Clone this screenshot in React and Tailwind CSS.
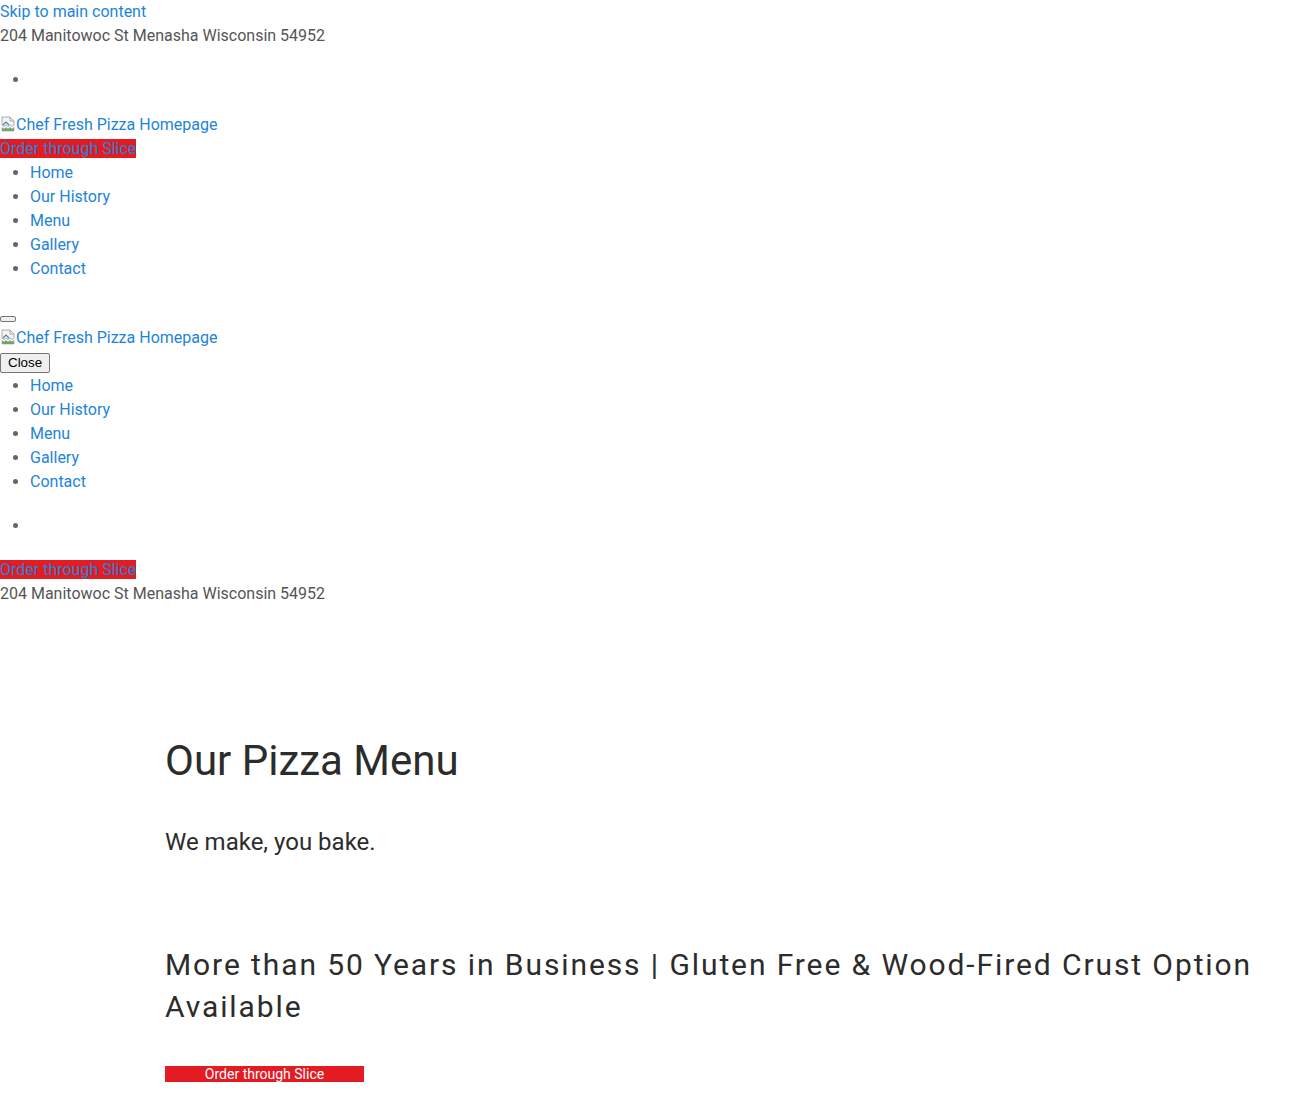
import React from "react";

const BrokenImg = () => (
  <svg width="16" height="16" viewBox="0 0 16 16" className="inline-block align-[-2px]">
    <path d="M2 1h8l4 4v4l-2 1.5-2-1.5-2 1.5-2-1.5-2 1.5-2-1.5z" fill="#f4f4f4" stroke="#9a9a9a" strokeWidth="0.8" />
    <path d="M10 1v4h4" fill="none" stroke="#9a9a9a" strokeWidth="0.8" />
    <path d="M2 11.5l2 1.5 2-1.5 2 1.5 2-1.5 2 1.5 2-1.5V15H2z" fill="#6aa84f" stroke="#9a9a9a" strokeWidth="0.6" />
    <path d="M3 9l3-3 3 3" fill="none" stroke="#3d85c6" strokeWidth="1.2" />
  </svg>
);

const link = "text-[#1d84d9]";
const navItems = ["Home", "Our History", "Menu", "Gallery", "Contact"];

function Nav() {
  return (
    <ul className="list-disc pl-[30px] marker:text-[#666]">
      {navItems.map((n) => (
        <li key={n} className="h-6 leading-6">
          <a className={link} href="#">{n}</a>
        </li>
      ))}
    </ul>
  );
}

function EmptyList() {
  return (
    <ul className="list-disc pl-[30px] my-4 marker:text-[#666]">
      <li className="h-8 leading-[32px]">
        <span className="inline-block w-0 h-[20px] align-middle" />
      </li>
    </ul>
  );
}

const Slice = () => (
  <div className="h-6 leading-6">
    <a href="#" className={`${link} bg-[#e31b23]`}>Order through Slice</a>
  </div>
);

const Logo = () => (
  <div className="h-[25px] leading-[26px]">
    <a href="#" className={link}><BrokenImg />Chef Fresh Pizza Homepage</a>
  </div>
);

const btnDefault = "border border-[#767676] rounded-[2px] bg-[#efefef] text-black";

export default function App() {
  return (
    <div className="bg-white min-h-[1103px] text-[16px] leading-6 text-[#555]" style={{ fontFamily: "Roboto, 'Liberation Sans', sans-serif" }}>
      <div className="h-6"><a href="#" className={link}>Skip to main content</a></div>
      <div className="h-6">204 Manitowoc St Menasha Wisconsin 54952</div>
      <EmptyList />
      <Logo />
      <Slice />
      <Nav />
      <div className="h-[35px]" />
      <button className={`${btnDefault} block w-[16px] h-[6px] p-0`} />
      <div className="h-[3px]" />
      <Logo />
      <div className="h-[3px]" />
      <button className={`${btnDefault} block h-5 px-[7px] text-[13.33px] leading-[16px]`} style={{ fontFamily: "Arial, 'Liberation Sans', sans-serif" }}>Close</button>
      <div className="h-px" />
      <Nav />
      <EmptyList />
      <Slice />
      <div className="h-6">204 Manitowoc St Menasha Wisconsin 54952</div>

      <main className="pl-[165px] pr-[20px] pt-[131px] text-[#2c2c2c]">
        <h1 className="text-[42px] leading-[48px] font-normal">Our Pizza Menu</h1>
        <p className="mt-[39px] text-[24px] leading-[36px]">We make, you bake.</p>
        <h2 className="mt-[84px] text-[30px] leading-[42px] tracking-[1.9px] font-normal max-w-[1105px]">
          More than 50 Years in Business | Gluten Free &amp; Wood-Fired Crust Option Available
        </h2>
        <div className="mt-[38px]">
          <a href="#" className="block w-[199px] h-4 bg-[#e31b23] text-white text-[14px] leading-4 text-center">Order through Slice</a>
        </div>
      </main>
    </div>
  );
}
